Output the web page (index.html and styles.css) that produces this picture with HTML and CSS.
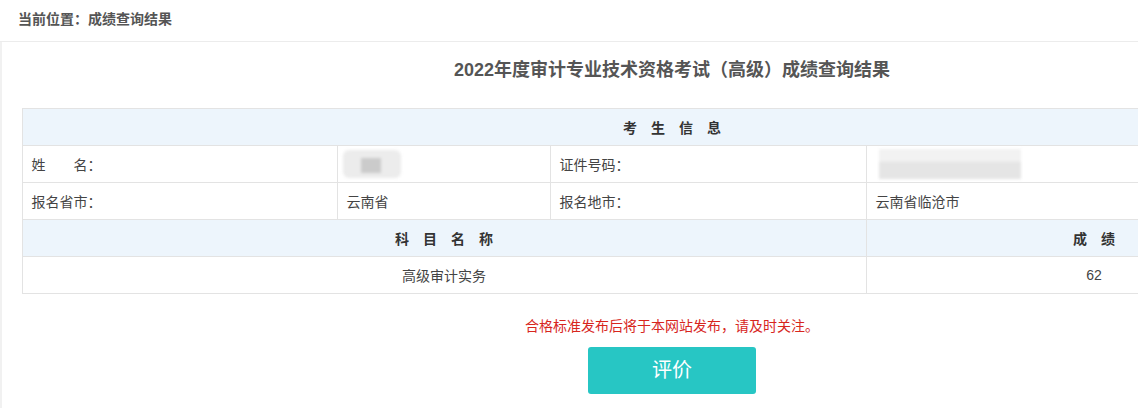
FILE: index.html
```html
<!DOCTYPE html>
<html>
<head>
  <meta charset="utf-8">
  <title>成绩查询结果</title>
  <link rel="stylesheet" href="styles.css">
</head>
<body>
<div class="crumb">当前位置：成绩查询结果</div>

<div class="main">
  <h2 class="result-title">2022年度审计专业技术资格考试（高级）成绩查询结果</h2>

  <table class="score-table">
    <colgroup>
      <col class="c1">
      <col class="c2">
      <col class="c3">
      <col class="c4">
    </colgroup>
    <tr class="head">
      <td colspan="4">考　生　信　息</td>
    </tr>
    <tr>
      <td>姓　　名：</td>
      <td><span class="mask mask-name"><i></i></span></td>
      <td>证件号码：</td>
      <td><span class="mask mask-id"></span></td>
    </tr>
    <tr>
      <td>报名省市：</td>
      <td>云南省</td>
      <td>报名地市：</td>
      <td>云南省临沧市</td>
    </tr>
    <tr class="head">
      <td colspan="3">科　目　名　称</td>
      <td>成　绩</td>
    </tr>
    <tr class="center">
      <td colspan="3">高级审计实务</td>
      <td>62</td>
    </tr>
  </table>

  <p class="notice">合格标准发布后将于本网站发布，请及时关注。</p>

  <div class="actions">
    <a class="btn-rate" href="#">评价</a>
  </div>
</div>
</body>
</html>
```

FILE: styles.css
```css
html, body {
  margin: 0;
  padding: 0;
  overflow: hidden;
  background: #fff;
}

body {
  font-family: "Liberation Sans", "Noto Sans CJK SC", sans-serif;
  font-size: 14px;
  color: #333;
  width: 1344px;
}

.crumb {
  height: 41px;
  line-height: 39px;
  padding-left: 18px;
  border-bottom: 1px solid #ececec;
  font-size: 14px;
  font-weight: 600;
  color: #555;
}

.main {
  width: 1340px;
  border-left: 2px solid #f1f1f1;
  padding: 16px 0 30px;
}

.result-title {
  margin: 0 0 26px;
  line-height: 24px;
  font-size: 18px;
  font-weight: bold;
  color: #555;
  text-align: center;
}

.score-table {
  width: 1300px;
  margin: 0 auto;
  border-collapse: collapse;
  table-layout: fixed;
}

.score-table .c1 { width: 315px; }
.score-table .c2 { width: 213px; }
.score-table .c3 { width: 316px; }
.score-table .c4 { width: 456px; }

.score-table td {
  height: 36px;
  padding: 0 9px;
  border: 1px solid #e3e3e3;
  color: #444;
  white-space: nowrap;
}

.score-table .head td {
  background: #edf5fc;
  text-align: center;
  font-weight: bold;
  color: #333;
}

.score-table .center td {
  text-align: center;
}

.mask {
  display: inline-block;
  vertical-align: middle;
  filter: blur(1.5px);
}

.mask-name {
  position: relative;
  width: 58px;
  height: 28px;
  margin-left: -4px;
  background: #ececec;
  border-radius: 6px;
}

.mask-name i {
  position: absolute;
  left: 18px;
  top: 8px;
  width: 20px;
  height: 15px;
  background: #cbcbcb;
}

.mask-id {
  width: 142px;
  height: 30px;
  margin-left: 3px;
  background: linear-gradient(#f2f2f2 0, #f2f2f2 40%, #e5e5e5 45%, #e5e5e5 100%);
}

.notice {
  margin: 22px 0 0;
  line-height: 20px;
  font-size: 14px;
  color: #d7261e;
  text-align: center;
}

.actions {
  margin-top: 11px;
  text-align: center;
}

.btn-rate {
  display: inline-block;
  width: 168px;
  height: 47px;
  line-height: 47px;
  border-radius: 3px;
  background: #27c6c4;
  color: #fff;
  font-size: 20px;
  text-decoration: none;
}
```
